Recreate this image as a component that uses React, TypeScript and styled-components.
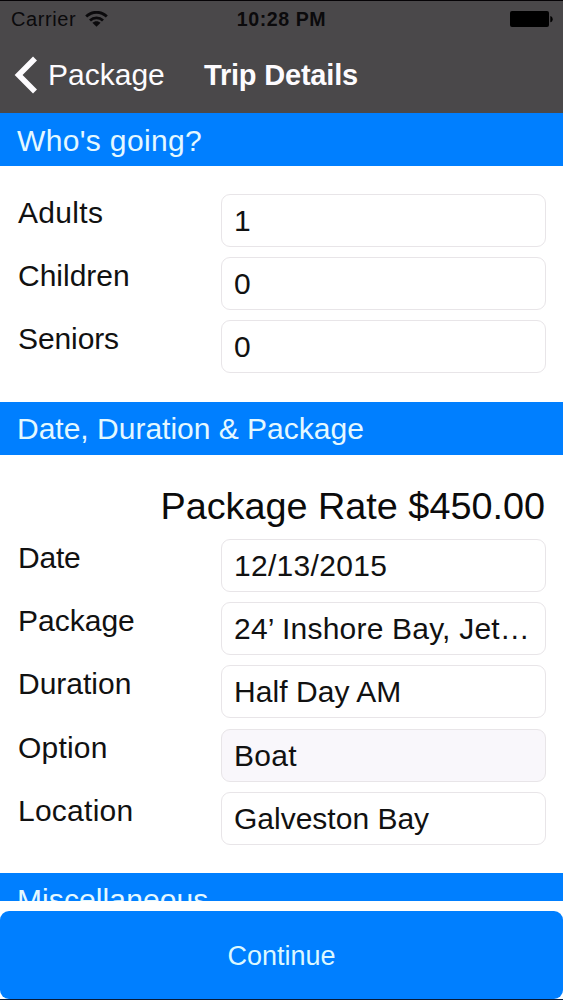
import React from "react";
import styled, { createGlobalStyle } from "styled-components";

const BLUE = "#007fff";

const GlobalStyle = createGlobalStyle`
  *, *::before, *::after { box-sizing: border-box; }
  html, body { margin: 0; padding: 0; background: #fff; }
  body { font-family: "Liberation Sans", Arial, sans-serif; overflow: hidden; }
`;

const Screen = styled.div`
  width: 563px;
  height: 1000px;
  display: flex;
  flex-direction: column;
  overflow: hidden;
  background: #fff;
  color: #111;
`;

const TopBar = styled.header`
  flex: none;
  height: 113px;
  background: #4a484a;
  border-top: 1px solid #050306;
`;

const StatusBar = styled.div`
  height: 36px;
  display: grid;
  grid-template-columns: 1fr auto 1fr;
  align-items: center;
  padding: 0 10px 0 10px;
  color: #0b0a0c;
  font-size: 20px;
  line-height: 36px;
`;

const Carrier = styled.div`
  display: flex;
  align-items: center;
  gap: 9px;
  padding-left: 1px;
  letter-spacing: 0.6px;
`;

const Clock = styled.div`
  font-weight: bold;
  font-size: 19.6px;
  letter-spacing: 0.55px;
`;

const BatteryIcon = styled.svg`
  justify-self: end;
  display: block;
`;

const NavBar = styled.nav`
  height: 76px;
  display: flex;
  align-items: center;
  color: #fdfbfe;
  line-height: 76px;
`;

const BackButton = styled.button`
  display: flex;
  align-items: center;
  gap: 10px;
  width: 190px;
  padding: 0 0 0 14px;
  border: 0;
  background: none;
  color: inherit;
  font: inherit;
  font-size: 30px;
`;

const NavTitle = styled.h1`
  margin: 0 0 0 14px;
  font-size: 29px;
  font-weight: bold;
  letter-spacing: -0.2px;
  white-space: nowrap;
`;

const Content = styled.main`
  flex: none;
  height: 788px;
  overflow: hidden;
`;

const SectionHeader = styled.h2<{ $tracking?: number; $lineHeight?: number }>`
  margin: 0;
  height: 53px;
  padding-left: 17px;
  background: ${BLUE};
  color: #e4f8ff;
  font-size: 30px;
  font-weight: normal;
  line-height: ${(p) => p.$lineHeight ?? 54}px;
  letter-spacing: ${(p) => p.$tracking ?? 0}px;
  white-space: nowrap;
`;

const Fields = styled.section<{ $top: number; $bottom: number }>`
  display: flex;
  flex-direction: column;
  gap: 10.2px;
  padding: ${(p) => p.$top}px 17px ${(p) => p.$bottom}px 18px;
`;

const Rate = styled.p`
  margin: 0;
  padding: 28px 18px 0 0;
  height: 84.1px;
  font-size: 37.8px;
  line-height: 46px;
  text-align: right;
  white-space: nowrap;
  color: #0b0b0b;
`;

const Row = styled.div`
  display: flex;
  height: 53px;
`;

const Label = styled.label<{ $tracking: number }>`
  flex: none;
  width: 203px;
  font-size: 30px;
  line-height: 37px;
  letter-spacing: ${(p) => p.$tracking}px;
`;

const Field = styled.div<{ $disabled?: boolean; $tracking: number }>`
  flex: 1;
  min-width: 0;
  padding-left: 12px;
  border: 1px solid #e8e5e8;
  border-radius: 9px;
  background: ${(p) => (p.$disabled ? "#f9f7fb" : "#fff")};
  font-size: 30px;
  line-height: 51px;
  letter-spacing: ${(p) => p.$tracking}px;
  white-space: nowrap;
`;

const Footer = styled.footer`
  flex: 1;
  padding-top: 10px;
  border-bottom: 1px solid #061a38;
  display: flex;
`;

const ContinueButton = styled.button`
  flex: 1;
  border: 0;
  border-radius: 9px;
  padding: 2px 0 0;
  background: ${BLUE};
  color: #dcf8ff;
  font: inherit;
  font-size: 27px;
`;

type RowData = {
  label: string;
  value: string;
  labelTracking?: number;
  valueTracking?: number;
  disabled?: boolean;
};

const people: RowData[] = [
  { label: "Adults", value: "1", labelTracking: 0.3 },
  { label: "Children", value: "0" },
  { label: "Seniors", value: "0", labelTracking: -0.1 },
];

const details: RowData[] = [
  { label: "Date", value: "12/13/2015", labelTracking: -0.2, valueTracking: 0.3 },
  { label: "Package", value: "24’ Inshore Bay, Jet…", valueTracking: 0.2 },
  { label: "Duration", value: "Half Day AM", valueTracking: 0.05 },
  { label: "Option", value: "Boat", labelTracking: 0.2, valueTracking: 0.3, disabled: true },
  { label: "Location", value: "Galveston Bay", labelTracking: 0.25 },
];

const FieldRow = ({ label, value, labelTracking = 0, valueTracking = 0, disabled }: RowData) => (
  <Row>
    <Label $tracking={labelTracking}>{label}</Label>
    <Field $disabled={disabled} $tracking={valueTracking}>
      {value}
    </Field>
  </Row>
);

const WifiIcon = () => (
  <svg width="23" height="17" viewBox="0 0 23 17" fill="none" stroke="currentColor" strokeWidth="2.8">
    <path d="M1.2 5.6C7 -.2 16 -.2 21.8 5.6" />
    <path d="M5 9.5C8.7 5.9 14.3 5.9 18 9.5" />
    <path d="M11.5 15.8 7.4 11.7C9.7 9.6 13.3 9.6 15.6 11.700Z" fill="currentColor" stroke="none" />
  </svg>
);

export default function App() {
  return (
    <>
      <GlobalStyle />
      <Screen>
        <TopBar>
          <StatusBar>
            <Carrier>
              Carrier
              <WifiIcon />
            </Carrier>
            <Clock>10:28 PM</Clock>
            <BatteryIcon width="43" height="17" viewBox="0 0 43 17" fill="#000">
              <rect x="0" y="0" width="39" height="16" rx="2" />
              <path d="M40.3 5c3.2 1 3.2 5.3 0 6.3z" />
            </BatteryIcon>
          </StatusBar>
          <NavBar>
            <BackButton>
              <svg width="24" height="38" viewBox="0 0 24 38" fill="none" stroke="currentColor" strokeWidth="5.6">
                <path d="M21 2.5 4.6 19 21 35.5" />
              </svg>
              Package
            </BackButton>
            <NavTitle>Trip Details</NavTitle>
          </NavBar>
        </TopBar>
        <Content>
          <SectionHeader $tracking={0.35} $lineHeight={55}>
            Who's going?
          </SectionHeader>
          <Fields $top={28} $bottom={28.6}>
            {people.map((r) => (
              <FieldRow key={r.label} {...r} />
            ))}
          </Fields>
          <SectionHeader>Date, Duration &amp; Package</SectionHeader>
          <Rate>Package Rate $450.00</Rate>
          <Fields $top={0} $bottom={28.1}>
            {details.map((r) => (
              <FieldRow key={r.label} {...r} />
            ))}
          </Fields>
          <SectionHeader $tracking={0.1}>Miscellaneous</SectionHeader>
        </Content>
        <Footer>
          <ContinueButton>Continue</ContinueButton>
        </Footer>
      </Screen>
    </>
  );
}
